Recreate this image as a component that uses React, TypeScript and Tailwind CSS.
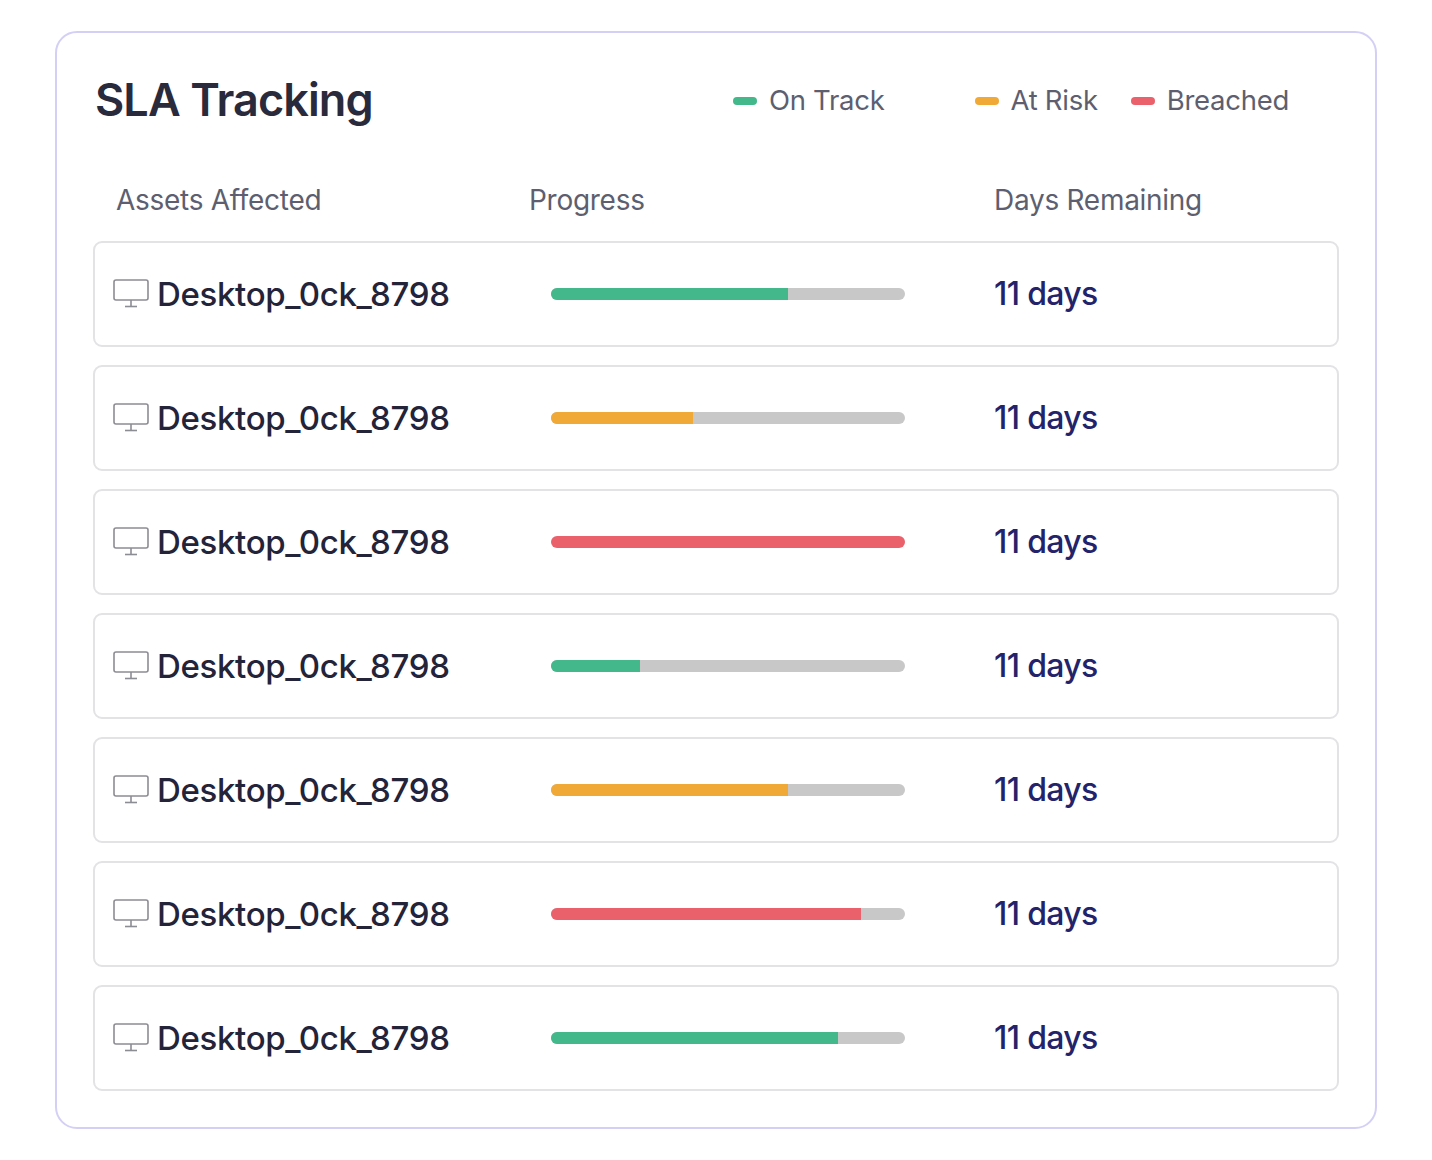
import React from "react";

type Row = { name: string; pct: number; color: string };

const rows: Row[] = [
  { name: "Desktop_0ck_8798", pct: 67, color: "bg-[#43b88a]" },
  { name: "Desktop_0ck_8798", pct: 40, color: "bg-[#f0a936]" },
  { name: "Desktop_0ck_8798", pct: 100, color: "bg-[#ea616b]" },
  { name: "Desktop_0ck_8798", pct: 25, color: "bg-[#43b88a]" },
  { name: "Desktop_0ck_8798", pct: 67, color: "bg-[#f0a936]" },
  { name: "Desktop_0ck_8798", pct: 87.5, color: "bg-[#ea616b]" },
  { name: "Desktop_0ck_8798", pct: 81, color: "bg-[#43b88a]" },
];

function MonitorIcon() {
  return (
    <svg width="36" height="30" viewBox="0 0 36 30" fill="none" stroke="#8c8c94" strokeWidth="1.6">
      <rect x="1" y="1" width="34" height="20" rx="2" />
      <line x1="18" y1="21" x2="18" y2="27.5" />
      <line x1="12" y1="27.5" x2="24" y2="27.5" />
    </svg>
  );
}

function Legend({ label, color }: { label: string; color: string }) {
  return (
    <div className="flex items-center gap-[12px]">
      <span className={`block w-[24px] h-[8px] rounded-full ${color}`} />
      <span className="text-[27.5px] leading-none text-[#5d5f70] tracking-[-0.01em]">{label}</span>
    </div>
  );
}

export default function App() {
  return (
    <div className="min-h-screen bg-white pt-[31px] pl-[55px]" style={{ fontFamily: "Inter, 'Noto Sans', sans-serif" }}>
      <div className="w-[1322px] h-[1098px] rounded-[22px] border-2 border-[#d4cff5] px-[36px] pt-[37px]">
        <div className="flex items-center justify-between h-[58px]">
          <h1 className="pl-[2px] text-[45px] leading-none font-semibold text-[#2a2a3d] tracking-[-0.02em]">SLA Tracking</h1>
          <div className="flex items-center pr-[50px] mt-[4px]">
            <Legend label="On Track" color="bg-[#43b88a]" />
            <div className="w-[90px]" />
            <Legend label="At Risk" color="bg-[#f0a936]" />
            <div className="w-[33px]" />
            <Legend label="Breached" color="bg-[#ea616b]" />
          </div>
        </div>

        <div className="flex items-center h-[60px] mt-[42px] pl-[23px] text-[28px] leading-none text-[#5d5f70] tracking-[-0.01em]">
          <div className="w-[413px]">Assets Affected</div>
          <div className="w-[465px]">Progress</div>
          <div>Days Remaining</div>
        </div>

        <div className="flex flex-col gap-[18px] mt-[11px]">
          {rows.map((r, i) => (
            <div key={i} className="h-[106px] rounded-[9px] border-2 border-[#e3e3e6] flex items-center pl-[18px]">
              <div className="w-[438px] flex items-center gap-[8px]">
                <MonitorIcon />
                <span className="text-[33px] leading-none font-medium text-[#23233a] tracking-[-0.01em]">{r.name}</span>
              </div>
              <div className="w-[443px]">
                <div className="w-[354px] h-[12px] rounded-full bg-[#c8c8c8] overflow-hidden">
                  <div className={`h-full ${r.color}`} style={{ width: `${r.pct}%` }} />
                </div>
              </div>
              <div className="text-[32px] leading-none font-medium text-[#23236b] tracking-[-0.02em]">11 days</div>
            </div>
          ))}
        </div>
      </div>
    </div>
  );
}
